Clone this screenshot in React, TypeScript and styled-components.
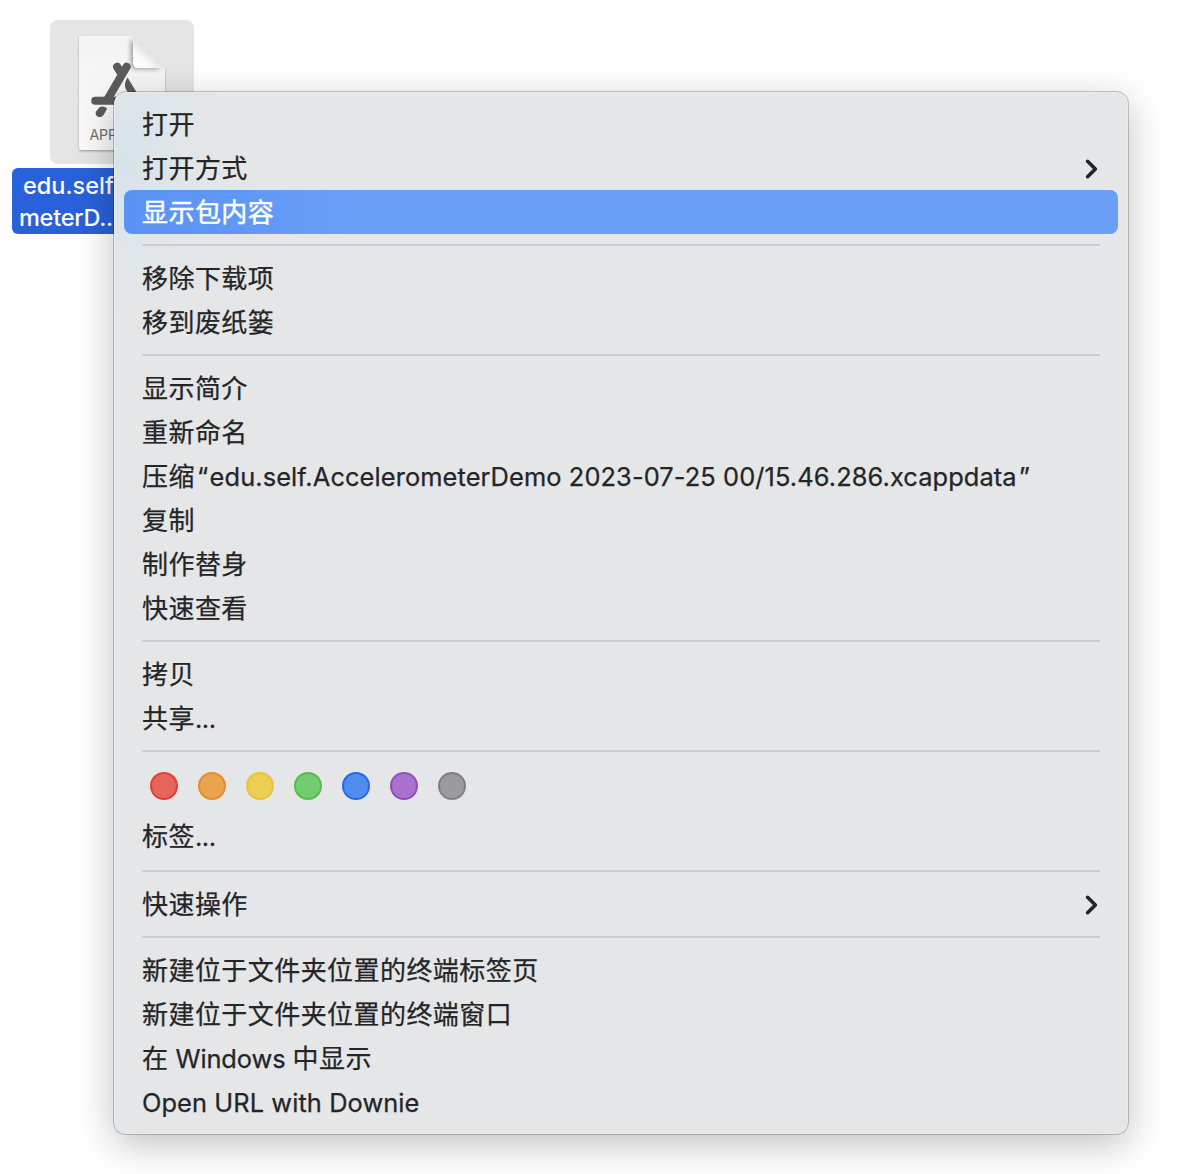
import React from "react";
import styled, { createGlobalStyle } from "styled-components";

const GlobalStyle = createGlobalStyle`
  * { box-sizing: border-box; }
  body {
    margin: 0;
    background: #fff;
    font-family: Inter, "Noto Sans CJK SC", sans-serif;
  }
`;

const Desktop = styled.main`
  position: relative;
  width: 1186px;
  height: 1174px;
  overflow: hidden;
  background: #fff;
`;

const FileItem = styled.div`
  display: flex;
  flex-direction: column;
  align-items: center;
  gap: 4px;
  width: 220px;
  padding-top: 20px;
  margin-left: 12px;
`;

const FileThumb = styled.div`
  width: 144px;
  height: 144px;
  border-radius: 8px;
  background: #e5e5e5;
`;

const FileName = styled.div`
  width: 220px;
  height: 66px;
  padding: 2px 0 0 7px;
  border-radius: 6px;
  background: #2961da;
  color: #fff;
  font-size: 23.5px;
  font-weight: 500;
  line-height: 32px;
  white-space: nowrap;
`;

const NameLine = styled.div<{ $indent?: number; $spacing: number }>`
  padding-left: ${(p) => p.$indent ?? 0}px;
  letter-spacing: ${(p) => p.$spacing}px;
`;

const Menu = styled.nav`
  position: absolute;
  left: 114px;
  top: 92px;
  width: 1014px;
  height: 1042px;
  padding: 10px;
  border-radius: 12px;
  background:
    radial-gradient(ellipse 125px 165px at 6px 72px, rgba(208, 225, 236, 0.7), rgba(217, 230, 234, 0.45) 50%, rgba(229, 230, 232, 0) 100%),
    #e5e6e8;
  box-shadow:
    0 0 0 1px rgba(0, 0, 0, 0.2),
    0 10px 38px rgba(0, 0, 0, 0.26),
    inset 0 0 0 1px rgba(255, 255, 255, 0.22);
`;

const Row = styled.div<{ $selected?: boolean }>`
  display: flex;
  align-items: center;
  justify-content: space-between;
  height: 44px;
  padding: 2px 18px 0;
  border-radius: 8px;
  color: ${(p) => (p.$selected ? "#fff" : "#242526")};
  background: ${(p) =>
    p.$selected ? "linear-gradient(90deg, #5b93f5 0, #5f97f6 100px, #6a9ff8 240px)" : "transparent"};
  font-size: 26px;
  line-height: 42px;
  letter-spacing: 0.44px;
  -webkit-text-stroke: ${(p) => (p.$selected ? 0.5 : 0.25)}px currentColor;
  white-space: pre;
`;

const Latin = styled.span<{ $spacing?: number }>`
  font-size: 25.4px;
  letter-spacing: ${(p) => p.$spacing ?? 0}px;
`;

const Quote = styled.span<{ $open?: boolean }>`
  font-size: 25.4px;
  letter-spacing: 0;
  padding-left: 2px;
  padding-right: ${(p) => (p.$open ? 1.5 : 0)}px;
`;

const Separator = styled.div`
  height: 22px;
  padding: 10px 18px;

  &::before {
    content: "";
    display: block;
    height: 2px;
    background: #cbccce;
  }
`;

const TagRow = styled.div`
  display: flex;
  align-items: center;
  gap: 20px;
  height: 52px;
  padding: 0 26px 4px;
`;

const Tag = styled.span<{ $fill: string; $edge: string }>`
  width: 28px;
  height: 28px;
  border-radius: 50%;
  background: ${(p) => p.$fill};
  border: 2px solid ${(p) => p.$edge};
`;

const TagLabel = styled.div`
  padding-bottom: 2px;
`;

const ChevronIcon = styled.svg`
  width: 14px;
  height: 22px;
  margin-right: 2px;
`;

function Chevron() {
  return (
    <ChevronIcon viewBox="0 0 14 22" fill="none">
      <path d="M3.6 3.3 11.4 11 3.6 18.7" stroke="#242526" strokeWidth="3.6" strokeLinecap="round" strokeLinejoin="round" />
    </ChevronIcon>
  );
}

function AppDocument() {
  return (
    <svg width="144" height="144" viewBox="50 20 144 144">
      <defs>
        <linearGradient id="paper" x1="0" y1="0" x2="0" y2="1">
          <stop offset="0" stopColor="#f3f3f3" />
          <stop offset="1" stopColor="#fbfbfb" />
        </linearGradient>
        <linearGradient id="fold" gradientUnits="userSpaceOnUse" x1="134" y1="67" x2="148" y2="51">
          <stop offset="0" stopColor="#ffffff" />
          <stop offset="0.5" stopColor="#fafafa" />
          <stop offset="1" stopColor="#e2e2e2" />
        </linearGradient>
        <filter id="lift" x="-20%" y="-20%" width="140%" height="140%">
          <feDropShadow dx="0" dy="1.2" stdDeviation="1" floodColor="#000" floodOpacity="0.32" />
        </filter>
        <filter id="soft" x="-40%" y="-40%" width="180%" height="180%">
          <feGaussianBlur stdDeviation="2.5" />
        </filter>
        <clipPath id="sheet">
          <path d="M82 36H133L165 68V147a3 3 0 0 1-3 3H82a3 3 0 0 1-3-3V39a3 3 0 0 1 3-3Z" />
        </clipPath>
      </defs>
      <path d="M82 36H133L165 68V147a3 3 0 0 1-3 3H82a3 3 0 0 1-3-3V39a3 3 0 0 1 3-3Z" fill="url(#paper)" filter="url(#lift)" />
      <g clipPath="url(#sheet)">
        <path d="M131 40V64q0 5 6 5H161L133 40Z" fill="#000" opacity="0.38" filter="url(#soft)" />
      </g>
      <g stroke="#5b5b5b" strokeLinecap="round" fill="none">
        <path d="M126.6 66.8 107.5 99.5" strokeWidth="8.2" />
        <path d="M117.2 66.8 121.5 74" strokeWidth="8.2" />
        <path d="M95.2 100.8H150" strokeWidth="8" />
      </g>
      <path d="M127.6 77.5c-2.7 3.7-3.5 8.2-1.4 12.2l14 24 7-4Z" fill="#5b5b5b" />
      <path d="M99.5 107.2c3-1.2 5.8-.6 7.6 1.5l-3.4 6c-2.8 4.6-9.2 2-7.8-3Z" fill="#5b5b5b" />
      <path d="M133 36 165 68H138q-5 0-5-5Z" fill="url(#fold)" />
      <text x="89.5" y="140" fontFamily="Inter, sans-serif" fontSize="14.2" letterSpacing="-0.2" fill="#707070">APP</text>
    </svg>
  );
}

const tags = [
  ["#e5655a", "#df4236"],
  ["#eaa44d", "#e58e30"],
  ["#eece55", "#eac23c"],
  ["#74cc70", "#56bd4c"],
  ["#508cf0", "#2869ec"],
  ["#aa72cd", "#944dc0"],
  ["#9b9b9f", "#808084"],
];

export default function App() {
  return (
    <Desktop>
      <GlobalStyle />
      <FileItem>
        <FileThumb>
          <AppDocument />
        </FileThumb>
        <FileName>
          <NameLine $indent={4} $spacing={0}>edu.self</NameLine>
          <NameLine $spacing={-0.25}>meterD..</NameLine>
        </FileName>
      </FileItem>
      <Menu>
        <Row>打开</Row>
        <Row>打开方式<Chevron /></Row>
        <Row $selected>显示包内容</Row>
        <Separator />
        <Row>移除下载项</Row>
        <Row>移到废纸篓</Row>
        <Separator />
        <Row>显示简介</Row>
        <Row>重新命名</Row>
        <Row>
          <span>压缩<Quote $open>“</Quote><Latin $spacing={0.1}>edu.self.AccelerometerDemo 2023-07-25 00/15.46.286.xcappdata</Latin><Quote>”</Quote></span>
        </Row>
        <Row>复制</Row>
        <Row>制作替身</Row>
        <Row>快速查看</Row>
        <Separator />
        <Row>拷贝</Row>
        <Row><span>共享<Latin $spacing={-0.4}>...</Latin></span></Row>
        <Separator />
        <TagRow>
          {tags.map(([fill, edge]) => (
            <Tag key={fill} $fill={fill} $edge={edge} />
          ))}
        </TagRow>
        <TagLabel>
          <Row><span>标签<Latin $spacing={-0.4}>...</Latin></span></Row>
        </TagLabel>
        <Separator />
        <Row>快速操作<Chevron /></Row>
        <Separator />
        <Row>新建位于文件夹位置的终端标签页</Row>
        <Row>新建位于文件夹位置的终端窗口</Row>
        <Row><span>在<Latin $spacing={-0.1}> Windows </Latin>中显示</span></Row>
        <Row><Latin $spacing={0.08}>Open URL with Downie</Latin></Row>
      </Menu>
    </Desktop>
  );
}
